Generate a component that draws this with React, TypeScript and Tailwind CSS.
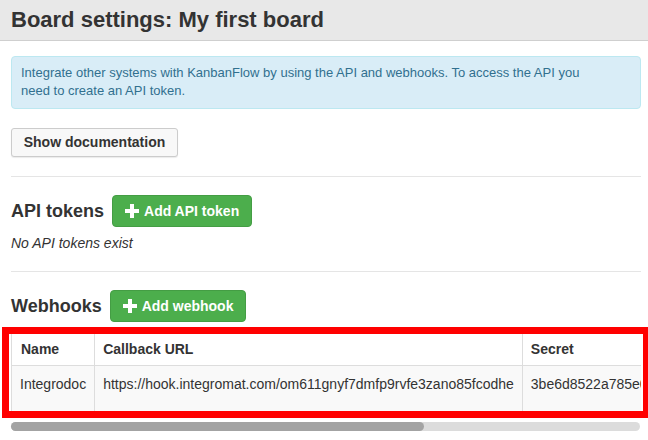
import React from 'react';

function PlusIcon() {
  return (
    <svg width="14" height="14" viewBox="0 0 14 14" className="shrink-0">
      <rect x="5" y="0" width="4" height="14" fill="white" />
      <rect x="0" y="5" width="14" height="4" fill="white" />
    </svg>
  );
}

function GreenButton({ label }: { label: string }) {
  return (
    <button className="h-[32px] flex items-center gap-[5px] px-[12px] rounded-[4px] bg-[#4cae4c] border border-[#449d44] text-white text-[14px] font-bold">
      <PlusIcon />
      <span>{label}</span>
    </button>
  );
}

export default function App() {
  return (
    <div className="w-[648px] h-[440px] overflow-hidden bg-white text-[#333] text-[14px] font-['Liberation_Sans',Arial,sans-serif]">
      <div className="h-[41px] bg-[#e8e8e8] border-b border-[#cfcfcf] pl-[11px] flex items-center">
        <h1 className="text-[22px] font-bold leading-none">Board settings: My first board</h1>
      </div>

      <div className="pl-[11px] pr-[7px]">
        <div className="mt-[15px] h-[53px] rounded-[4px] border border-[#bce8f1] bg-[#d9edf7] px-[9px] py-[7px] text-[13px] leading-[18px] text-[#31708f]">
          <p className="max-w-[575px]">
            Integrate other systems with KanbanFlow by using the API and webhooks. To access the API you need to create an API token.
          </p>
        </div>

        <button className="mt-[19px] h-[29px] w-[167px] rounded-[3px] border border-[#ccc] bg-[#f8f8f8] shadow-[0_1px_1px_rgba(0,0,0,0.08)] text-[14px] font-bold text-[#333]">
          Show documentation
        </button>

        <div className="mt-[19px] h-px bg-[#e5e5e5]" />

        <div className="mt-[18px] flex items-center gap-[8px]">
          <h2 className="text-[18px] font-bold">API tokens</h2>
          <GreenButton label="Add API token" />
        </div>
        <p className="mt-[7px] leading-[18px] italic">No API tokens exist</p>

        <div className="mt-[19px] h-px bg-[#e5e5e5]" />

        <div className="mt-[18px] flex items-center gap-[8px]">
          <h2 className="text-[18px] font-bold">Webhooks</h2>
          <GreenButton label="Add webhook" />
        </div>

        <div className="relative mt-[11px]">
          <div className="overflow-hidden w-[630px]">
            <table className="border-collapse text-[14px] text-left whitespace-nowrap">
              <thead>
                <tr className="h-[32px] bg-white">
                  <th className="border border-[#ddd] px-[9px] w-[84px] font-bold">Name</th>
                  <th className="border border-[#ddd] px-[8px] w-[428px] font-bold">Callback URL</th>
                  <th className="border border-[#ddd] px-[8px] font-bold">Secret</th>
                  <th className="border border-[#ddd] px-[8px] font-bold">Events</th>
                </tr>
              </thead>
              <tbody>
                <tr className="h-[46px] bg-[#f9f9f9]">
                  <td className="border border-[#ddd] px-[8px] pt-[8px] align-top">Integrodoc</td>
                  <td className="border border-[#ddd] px-[8px] pt-[8px] align-top">
                    https://hook.integromat.com/om611gnyf7dmfp9rvfe3zano85fcodhe
                  </td>
                  <td className="border border-[#ddd] px-[8px] pt-[8px] align-top">3be6d8522a785e0c91f4</td>
                  <td className="border border-[#ddd] px-[8px] pt-[8px] align-top">All events</td>
                </tr>
              </tbody>
            </table>
          </div>
          <div className="pointer-events-none absolute left-[-9px] right-[-9px] top-[-6px] bottom-[-6px] border-[7px] border-[#ff0000]" />
        </div>

        <div className="mt-[10px] h-[9px] w-[629px] rounded-full bg-[#dcdcdc]">
          <div className="h-full w-[413px] rounded-full bg-[#a3a3a3]" />
        </div>
      </div>
    </div>
  );
}
